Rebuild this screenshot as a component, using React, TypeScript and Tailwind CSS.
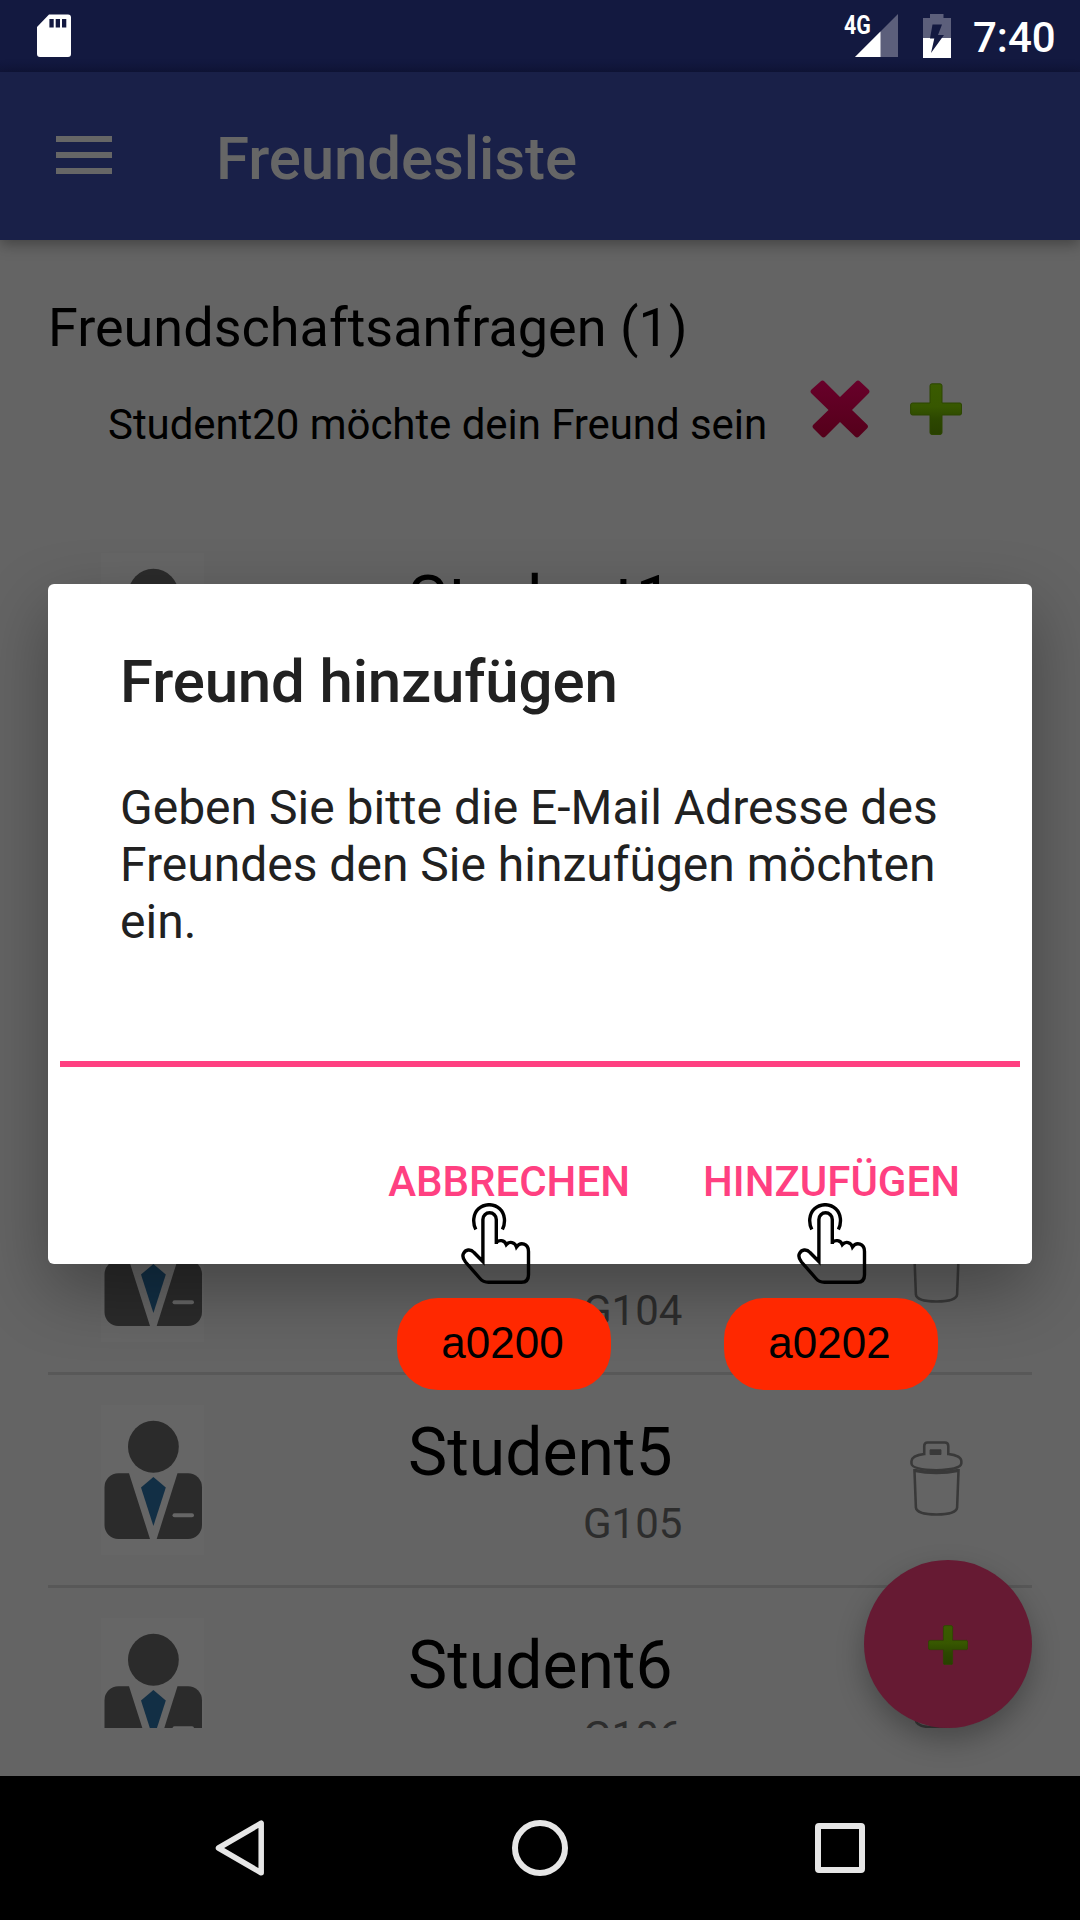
import React from "react";

const students = [
  { name: "Student4", group: "G104" },
  { name: "Student5", group: "G105" },
  { name: "Student6", group: "G106" },
];

function SdCardIcon() {
  return (
    <svg className="ml-[37px] h-[43px] w-[34px]" viewBox="0 0 34 43" fill="none">
      <path d="M12 .5H31A3 3 0 0 1 34 3.500V40a3 3 0 0 1-3 3H3a3 3 0 0 1-3-3V13z" fill="#fff" />
      <path d="M12.400 5h4.300v8.500h-4.300zM18.700 5h4.300v8.500h-4.300zM25 5h4.300v8.500H25z" fill="#131940" />
    </svg>
  );
}

function SignalIcon() {
  return (
    <svg className="h-[43px] w-[43px]" viewBox="0 0 43 43">
      <path d="M43 0V43H0z" fill="#5c5f7b" />
      <path d="M25.5 17.5V43H0z" fill="#fff" />
    </svg>
  );
}

function BatteryIcon() {
  return (
    <svg className="h-[44px] w-[28px]" viewBox="0 0 28 44">
      <path d="M7 0h13.500v4H28v20H0V4h7z" fill="#5c5f7b" />
      <path d="M0 24h28v20H0z" fill="#fff" />
      <path d="M9.500 10.500h9.500L15 21h6L8 39l3.300-14.500H7z" fill="#131940" />
    </svg>
  );
}

function PlusIcon({ className, id }: { className: string; id: string }) {
  return (
    <svg className={className} viewBox="0 0 52 52">
      <defs>
        <linearGradient id={id} x1="0" y1="0" x2="0" y2="1">
          <stop offset="0" stopColor="#3a5b00" />
          <stop offset="0.45" stopColor="#375700" />
          <stop offset="0.7" stopColor="#2c4700" />
          <stop offset="1" stopColor="#284000" />
        </linearGradient>
      </defs>
      <path
        d="M22 .8h8q2 0 2 2V20h18q1.500 0 1.500 2v8q0 2-1.500 2H32v17.500q0 2-2 2h-8q-2 0-2-2V32H2.500Q.6 32 .6 30v-8q0-2 1.900-2H20V2.800q0-2 2-2z"
        fill={`url(#${id})`}
        stroke="#2c4600"
        strokeWidth="1"
      />
    </svg>
  );
}

function CrossIcon() {
  return (
    <svg className="h-[60px] w-[60px]" viewBox="0 0 60 60">
      <defs>
        <linearGradient id="cross" x1="0" y1="0" x2="0" y2="1">
          <stop offset="0" stopColor="#68002a" />
          <stop offset="1" stopColor="#54001a" />
        </linearGradient>
      </defs>
      <path
        d="M10.500 1.500q2-2 4 0L30 17 46 1.500q2-2 4 0L58.500 9.500q2 2 0 4L42 30 57 44.500q2 2 0 4l-8 8q-2 2-4 0L30 42 15.500 56.500q-2 2-4 0l-8-8q-2-2 0-4L18.500 30 1.500 13.500q-2-2 0-4z"
        fill="url(#cross)"
      />
    </svg>
  );
}

function Avatar() {
  return (
    <svg className="ml-[53px] mt-[30px] h-[150px] w-[103px] shrink-0 bg-[#666666]" viewBox="0 0 103 150">
      <ellipse cx="52.400" cy="41.800" rx="25.400" ry="26" fill="#2b2b2b" />
      <path d="M17.500 68.200H28L49 134H17.500a14 14 0 0 1-14-14V82.200a14 14 0 0 1 14-14z" fill="#2b2b2b" />
      <path d="M76.500 68.200H87a14 14 0 0 1 14 14V120a14 14 0 0 1-14 14H55.700z" fill="#2b2b2b" />
      <path d="M52.400 72 64.800 82.500 52.400 121 40 82.500z" fill="#122f45" />
      <path d="M73.500 110.200H91" stroke="#666" strokeWidth="4" strokeLinecap="round" />
    </svg>
  );
}

function TrashIcon() {
  return (
    <svg className="mt-[66px] h-[76px] w-[53px]" viewBox="0 0 54 76" preserveAspectRatio="none" fill="none" stroke="#393939" strokeWidth="2.600">
      <path d="M14.500 13V5q0-3.500 3.500-3.500h17.500Q39 1.500 39 5v8q13 1.500 13.300 7v2.500q-1 6-25.500 6.800Q2 28.500 1.500 22.500V20Q2 14.500 14.500 13z" />
      <path d="M20.500 8.800h11v4.700h-11z" fill="#393939" strokeWidth="1" />
      <path d="M4.500 29.300Q26.800 34 49.500 29.300" strokeWidth="3.400" />
      <path d="M4.500 28 6 66.500Q7 73.500 27 73.500t21-7L49.500 28" />
    </svg>
  );
}

function StudentRow({ name, group }: { name: string; group?: string }) {
  return (
    <div className="flex h-[213px] shrink-0 border-b-[3px] border-[#585858]">
      <Avatar />
      <div className="ml-[204px] mt-[39px] w-[502px]">
        <div className="h-[85px] text-[66px] leading-[78px] text-black">{name}</div>
        {group && <div className="ml-[175px] text-[42px] leading-[50px] text-[#2d2d2d]">{group}</div>}
      </div>
      <TrashIcon />
    </div>
  );
}

function TapHand() {
  return (
    <svg className="h-[82px] w-[70px]" viewBox="0 0 70 82" fill="none" stroke="#000" strokeWidth="3.400">
      <path d="M14.800 26.500C11.500 20 11.900 11 17.500 5.800c6-5.500 15.500-5.500 21.200 0 5.600 5.200 6 14.200 2.700 20.700" />
      <path d="M35.300 41V16.500a6.700 6.700 0 0 0-13.400 0V58.500L13 49.500C9.500 45.500 4.500 46.500 2.500 50.500c-1.500 3 0 6 2 8.500L19 75.500q3.300 3.800 8.500 3.800H60.500q7 0 7-7.500V48.500c0-8-8-10-12-4.500-1.500-5-7-6-10.200-2.500C43.500 37 38 36.500 35.300 39.500" />
    </svg>
  );
}

function Marker({ label }: { label: string }) {
  return (
    <div className="flex h-[92px] w-[214px] justify-center rounded-[41px] bg-[#ff2800] pr-[3px] pt-[20px] font-['Liberation_Sans',sans-serif] text-[44px] leading-[50px] text-black">
      {label}
    </div>
  );
}

export default function App() {
  return (
    <div className="relative flex h-[1920px] w-[1080px] flex-col overflow-hidden bg-[#646464] font-['Roboto',sans-serif]">
      <div className="flex h-[72px] shrink-0 items-start bg-[linear-gradient(#131940_84%,#10153a)] pt-[14px]">
        <SdCardIcon />
        <div className="relative ml-[784px]">
          <SignalIcon />
          <span className="absolute -left-[11px] -top-[3px] origin-left scale-x-[0.82] text-[26px] font-bold leading-[28px] text-white">4G</span>
        </div>
        <div className="ml-[25px]">
          <BatteryIcon />
        </div>
        <span className="ml-[22px] mt-[-1px] text-[42px] font-medium leading-[50px] text-white">7:40</span>
      </div>

      <header className="relative z-10 flex h-[168px] shrink-0 items-start bg-[#192048] shadow-[0_4px_14px_rgba(0,0,0,0.35)]">
        <div className="ml-[56px] mt-[64px] flex w-[56px] flex-col gap-[10px]">
          <div className="h-[6px] bg-[#666666]" />
          <div className="h-[6px] bg-[#666666]" />
          <div className="h-[6px] bg-[#666666]" />
        </div>
        <h1 className="ml-[104px] mt-[52px] text-[60px] font-medium leading-[70px] tracking-[-0.1px] text-[#666666]">Freundesliste</h1>
      </header>

      <main className="flex h-[1488px] shrink-0 flex-col overflow-hidden px-[48px] pt-[56px]">
        <h2 className="h-[84px] shrink-0 text-[54px] leading-[64px] text-black">Freundschaftsanfragen (1)</h2>
        <div className="flex h-[143px] shrink-0 items-start pl-[60px]">
          <p className="mt-[20px] w-[702px] whitespace-nowrap text-[42px] leading-[50px] tracking-[-0.06px] text-black">Student20 möchte dein Freund sein</p>
          <CrossIcon />
          <PlusIcon id="plus-request" className="ml-[40px] mt-[3px] h-[52px] w-[52px]" />
        </div>
        <div className="flex flex-1 flex-col overflow-hidden">
          <StudentRow name="Student1" />
          <div className="h-[426px] shrink-0" />
          {students.map((s) => (
            <StudentRow key={s.name} name={s.name} group={s.group} />
          ))}
        </div>
      </main>

      <div className="h-[48px] shrink-0" />

      <button className="absolute bottom-[192px] right-[48px] flex h-[168px] w-[168px] items-center justify-center rounded-full bg-[#661a33] pt-[2px] shadow-[0_12px_28px_rgba(0,0,0,0.28)]">
        <PlusIcon id="plus-fab" className="h-[40px] w-[40px]" />
      </button>

      <nav className="relative z-30 flex h-[144px] shrink-0 items-center bg-black">
        <svg className="ml-[213px] h-[58px] w-[52px]" viewBox="0 0 52 58" fill="none" stroke="#e6e6e6" strokeWidth="5.500" strokeLinejoin="round">
          <path d="M48.200 4.200V53.800L5.500 29z" />
        </svg>
        <div className="ml-[247px] h-[56px] w-[56px] rounded-full border-[6px] border-[#e6e6e6]" />
        <div className="ml-[247px] h-[50px] w-[50px] rounded-[4px] border-[6px] border-[#e6e6e6]" />
      </nav>

      <div className="absolute left-[48px] top-[584px] z-20 flex h-[680px] w-[984px] flex-col rounded-[6px] bg-white pt-[63px] shadow-[0_26px_68px_rgba(0,0,0,0.32)]">
        <h2 className="px-[72px] text-[60px] font-medium leading-[70px] tracking-[-0.15px] text-[#212121]">Freund hinzufügen</h2>
        <p className="mt-[62px] px-[72px] text-[48px] leading-[57px] text-[#212121]">
          Geben Sie bitte die E-Mail Adresse des Freundes den Sie hinzufügen möchten ein.
        </p>
        <div className="mx-[12px] mt-[111px] h-[6px] bg-[#ff4081]" />
        <div className="mt-[90px] flex justify-end gap-[73px] pr-[72px] text-[42px] font-medium leading-[50px] text-[#ff4081]">
          <button>ABBRECHEN</button>
          <button>HINZUFÜGEN</button>
        </div>
      </div>

      <div className="absolute left-[461px] top-[1203px] z-30"><TapHand /></div>
      <div className="absolute left-[797px] top-[1203px] z-30"><TapHand /></div>
      <div className="absolute left-[397px] top-[1298px] z-30"><Marker label="a0200" /></div>
      <div className="absolute left-[724px] top-[1298px] z-30"><Marker label="a0202" /></div>
    </div>
  );
}
